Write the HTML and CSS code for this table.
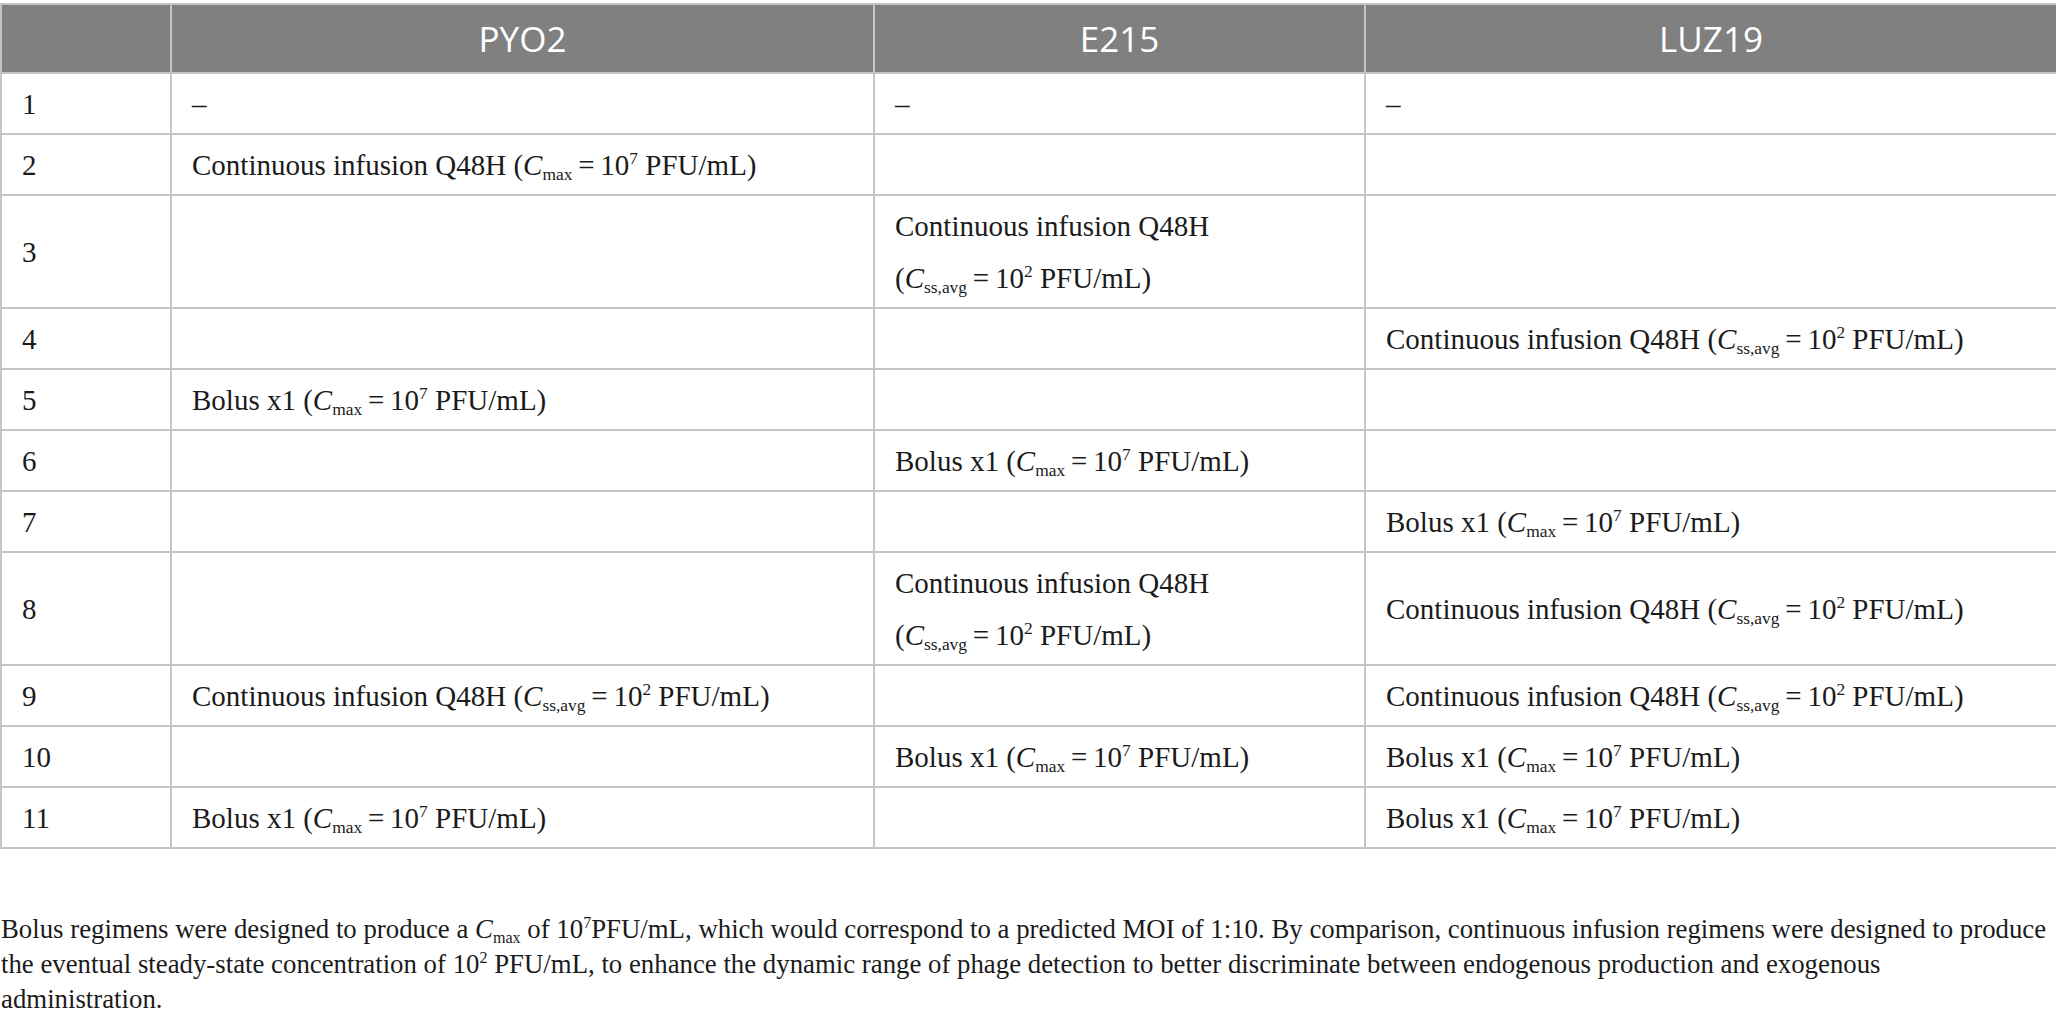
FILE: index.html
```html
<!DOCTYPE html>
<html>
<head>
<meta charset="utf-8">
<link rel="stylesheet" href="styles.css">
</head>
<body>
<table class="regimens">
  <colgroup>
    <col class="c-num">
    <col class="c-pyo">
    <col class="c-e215">
    <col class="c-luz">
  </colgroup>
  <thead>
    <tr><th></th><th>PYO2</th><th>E215</th><th>LUZ19</th></tr>
  </thead>
  <tbody>
    <tr><td>1</td><td>–</td><td>–</td><td>–</td></tr>
    <tr><td>2</td><td>Continuous infusion Q48H (<i>C</i><sub>max</sub>&#8201;=&#8201;10<sup>7</sup> PFU/mL)</td><td></td><td></td></tr>
    <tr><td>3</td><td></td><td>Continuous infusion Q48H<br>(<i>C</i><sub>ss,avg</sub>&#8201;=&#8201;10<sup>2</sup> PFU/mL)</td><td></td></tr>
    <tr><td>4</td><td></td><td></td><td>Continuous infusion Q48H (<i>C</i><sub>ss,avg</sub>&#8201;=&#8201;10<sup>2</sup> PFU/mL)</td></tr>
    <tr><td>5</td><td>Bolus x1 (<i>C</i><sub>max</sub>&#8201;=&#8201;10<sup>7</sup> PFU/mL)</td><td></td><td></td></tr>
    <tr><td>6</td><td></td><td>Bolus x1 (<i>C</i><sub>max</sub>&#8201;=&#8201;10<sup>7</sup> PFU/mL)</td><td></td></tr>
    <tr><td>7</td><td></td><td></td><td>Bolus x1 (<i>C</i><sub>max</sub>&#8201;=&#8201;10<sup>7</sup> PFU/mL)</td></tr>
    <tr><td>8</td><td></td><td>Continuous infusion Q48H<br>(<i>C</i><sub>ss,avg</sub>&#8201;=&#8201;10<sup>2</sup> PFU/mL)</td><td>Continuous infusion Q48H (<i>C</i><sub>ss,avg</sub>&#8201;=&#8201;10<sup>2</sup> PFU/mL)</td></tr>
    <tr><td>9</td><td>Continuous infusion Q48H (<i>C</i><sub>ss,avg</sub>&#8201;=&#8201;10<sup>2</sup> PFU/mL)</td><td></td><td>Continuous infusion Q48H (<i>C</i><sub>ss,avg</sub>&#8201;=&#8201;10<sup>2</sup> PFU/mL)</td></tr>
    <tr><td>10</td><td></td><td>Bolus x1 (<i>C</i><sub>max</sub>&#8201;=&#8201;10<sup>7</sup> PFU/mL)</td><td>Bolus x1 (<i>C</i><sub>max</sub>&#8201;=&#8201;10<sup>7</sup> PFU/mL)</td></tr>
    <tr><td>11</td><td>Bolus x1 (<i>C</i><sub>max</sub>&#8201;=&#8201;10<sup>7</sup> PFU/mL)</td><td></td><td>Bolus x1 (<i>C</i><sub>max</sub>&#8201;=&#8201;10<sup>7</sup> PFU/mL)</td></tr>
  </tbody>
</table>
<p class="footnote">Bolus regimens were designed to produce a <i>C</i><sub>max</sub> of 10<sup>7</sup>PFU/mL, which would correspond to a predicted MOI of 1:10. By comparison, continuous infusion regimens were designed to produce the eventual steady-state concentration of 10<sup>2</sup> PFU/mL, to enhance the dynamic range of phage detection to better discriminate between endogenous production and exogenous<br>administration.</p>
</body>
</html>
```
FILE: styles.css
```css
html, body {
  margin: 0;
  padding: 0;
  background: #ffffff;
}

body {
  font-family: "Liberation Serif", "Times New Roman", serif;
  color: #1b1b1b;
}

.regimens {
  width: 2056px;
  margin-top: 3px;
  border-collapse: collapse;
  table-layout: fixed;
}

.c-num { width: 170px; }
.c-pyo { width: 703px; }
.c-e215 { width: 491px; }
.c-luz { width: 692px; }

.regimens th {
  background: #808080;
  color: #ffffff;
  font-family: "Open Sans", "Liberation Sans", sans-serif;
  font-weight: 400;
  font-size: 35px;
  line-height: 52px;
  padding: 8px 20px 7px;
  text-align: center;
  border: 2px solid #c4c4c4;
}

.regimens td {
  font-size: 29px;
  line-height: 52px;
  padding: 3.5px 20px;
  text-align: left;
  vertical-align: middle;
  border: 2px solid #c4c4c4;
  white-space: nowrap;
}

sub, sup {
  line-height: 0;
  font-size: 0.6em;
  position: relative;
  vertical-align: baseline;
}

sub { top: 0.3em; }
sup { top: -0.6em; }

.footnote {
  margin: 63px 0 0;
  padding: 0 0 0 1px;
  font-size: 26.8px;
  line-height: 35px;
}
```
